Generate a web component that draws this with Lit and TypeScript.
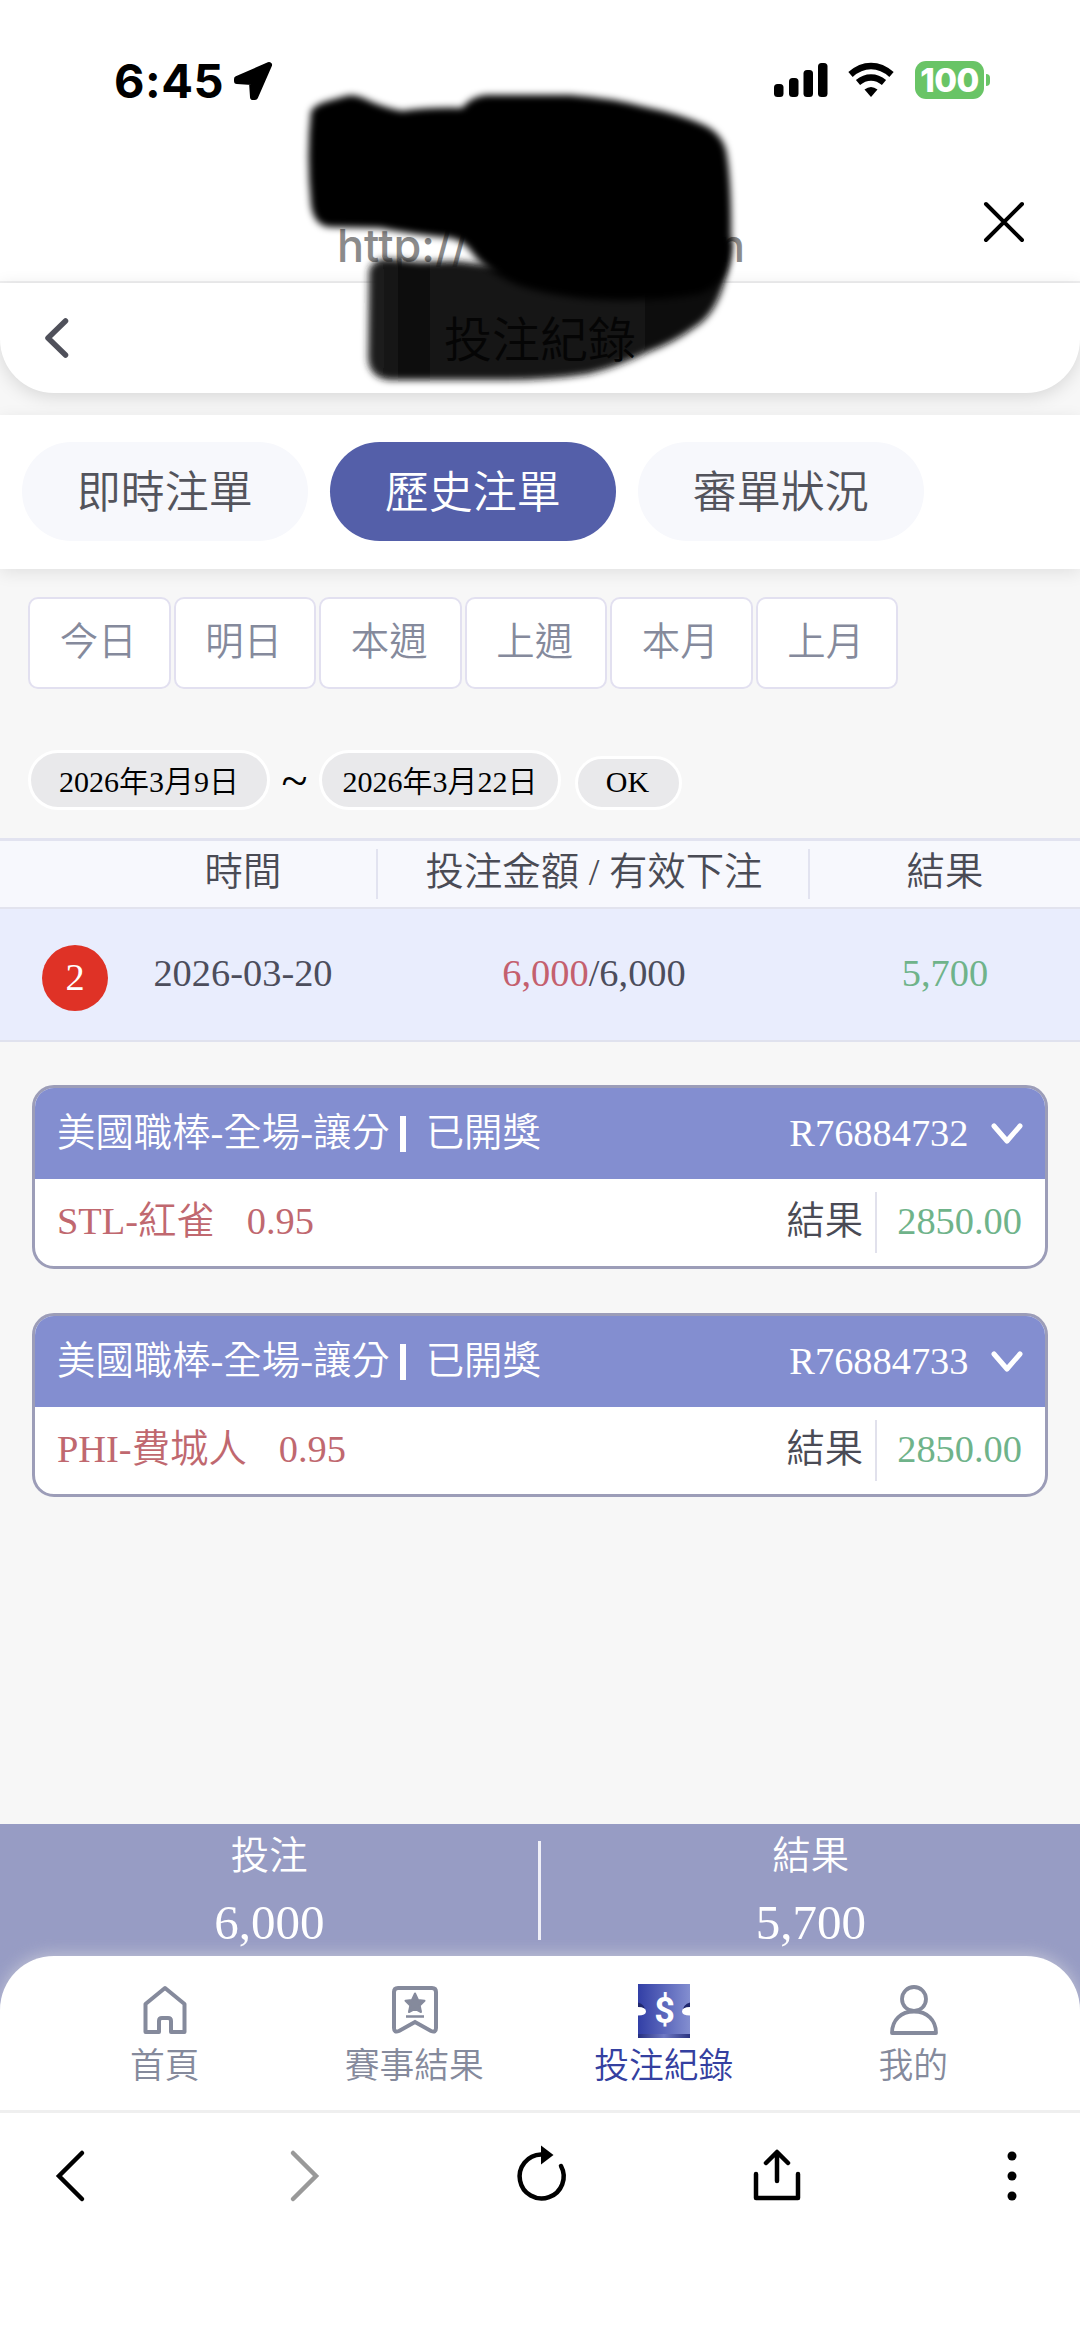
import { LitElement, html, css, svg } from "lit";
import { customElement, property } from "lit/decorators.js";

interface Bet {
  market: string;
  status: string;
  id: string;
  pick: string;
  odds: string;
  result: string;
}

const TABS = ["即時注單", "歷史注單", "審單狀況"];
const RANGES = ["今日", "明日", "本週", "上週", "本月", "上月"];
const BETS: Bet[] = [
  { market: "美國職棒-全場-讓分", status: "已開獎", id: "R76884732", pick: "STL-紅雀", odds: "0.95", result: "2850.00" },
  { market: "美國職棒-全場-讓分", status: "已開獎", id: "R76884733", pick: "PHI-費城人", odds: "0.95", result: "2850.00" },
];

@customElement("bet-card")
export class BetCard extends LitElement {
  @property({ attribute: false }) bet!: Bet;

  static styles = css`
    :host {
      display: block;
      box-sizing: border-box;
      height: 184px;
      border: 3px solid #9c9db8;
      border-radius: 22px;
      overflow: hidden;
      background: #fff;
      font-size: 38.4px;
      line-height: 44px;
    }
    .head {
      box-sizing: border-box;
      height: 91px;
      padding: 0 21px 2px 22px;
      display: flex;
      align-items: center;
      background: #838ed0;
      color: #fff;
    }
    .bar { width: 6px; height: 36px; background: #fff; margin: 3px 20px 0 10px; }
    .id { margin-left: auto; }
    .chev { width: 34px; height: 24px; margin: 2px 0 0 21.5px; }
    .body { display: flex; align-items: center; height: 87px; box-sizing: border-box; padding: 0 23px 3px 22px; }
    .pick { color: #c0686f; }
    .odds { color: #c0686f; margin-left: 32px; }
    .label { color: #4a4b55; margin-left: auto; }
    .rule { width: 2px; height: 61px; background: #e1e1ec; margin: 3px 20px 0 12px; }
    .result { color: #6fb38a; }
  `;

  render() {
    const b = this.bet;
    return html`
      <div class="head">
        <span>${b.market}</span><span class="bar"></span><span>${b.status}</span>
        <span class="id">${b.id}</span>
        <svg class="chev" viewBox="0 0 34 24" fill="none" stroke="#fff" stroke-width="5" stroke-linecap="round" stroke-linejoin="round">
          <path d="M4 4 L17 19 L30 4" />
        </svg>
      </div>
      <div class="body">
        <span class="pick">${b.pick}</span><span class="odds">${b.odds}</span>
        <span class="label">結果</span><span class="rule"></span><span class="result">${b.result}</span>
      </div>
    `;
  }
}

const homeIcon = svg`<path d="M4.500 20 L24 4 L43.500 20 V48 H30 V37 Q30 34 27 34 H21 Q18 34 18 37 V48 H4.500 Z" />`;

@customElement("app-root")
export class AppRoot extends LitElement {
  static styles = css`
    :host {
      display: flex;
      flex-direction: column;
      position: relative;
      box-sizing: border-box;
      width: 1080px;
      height: 2341px;
      overflow: hidden;
      background: #f7f7f7;
      font-family: "Liberation Serif", "Noto Sans CJK TC", serif;
      font-weight: 350;
      color: #4a4b55;
    }
    svg { display: block; flex: none; overflow: visible; }
    .status {
      height: 160px;
      box-sizing: border-box;
      padding: 0 90px 0 114px;
      display: flex;
      align-items: center;
      background: #fff;
      font-family: Inter, sans-serif;
      color: #000;
    }
    .time { font-size: 47px; font-weight: 750; line-height: 50px; letter-spacing: 0.5px; padding-top: 2px; }
    .arrow { margin-left: 8px; margin-top: 2px; }
    .icons { margin-left: auto; display: flex; align-items: center; }
    .wifi { margin-left: 20px; }
    .battery {
      width: 69px; height: 38px; border-radius: 11px; margin-left: 21px; 
      background: #69c466; color: #fff; font-weight: 800; font-size: 33px; line-height: 38px; text-align: center; letter-spacing: -0.5px;
    }
    .nub { width: 4px; height: 12px; margin-left: 2px; background: #69c466; border-radius: 0 4px 4px 0; }
    .address {
      height: 123px; box-sizing: border-box; border-bottom: 2px solid #f0f0f1; background: #fff;
      display: flex; align-items: center; position: relative; justify-content: flex-end; padding-right: 54px;
      font-family: Inter, sans-serif;
    }
    .url {
      position: absolute; left: 337px; width: 408px; top: 58px; display: flex; justify-content: space-between;
      font-size: 45px; line-height: 56px; color: #8b8b8b; font-weight: 500;
    }
    .close { margin-top: 2px; }
    .title {
      height: 110px; display: flex; align-items: center; justify-content: center; position: relative; flex: none;
      background: #fff; border-radius: 0 0 54px 54px; box-shadow: 0 4px 18px rgba(0, 0, 0, 0.13);
      font-size: 47.5px;
    }
    .back { position: absolute; left: 42px; top: 32px; }
    .scribble { position: absolute; left: 290px; top: 80px; pointer-events: none; }
    .faint { position: absolute; left: 0; right: 0; top: 314px; text-align: center; font-size: 48px; line-height: 54px; color: #050505; }
    .tabs {
      margin-top: 22px; height: 154px; box-sizing: border-box; flex: none; padding: 0 22px 1px; display: flex; gap: 22.5px; align-items: center;
      background: #fff; box-shadow: 0 4px 16px rgba(0, 0, 0, 0.09); font-size: 44px; position: relative;
    }
    .tab { width: 285.5px; height: 99px; box-sizing: border-box; padding: 0 0 6px 0; border-radius: 50px; background: #f7f8fc; display: flex; align-items: center; justify-content: center; color: #53545c; }
    .tab.on { background: #545fa9; color: #fff; }
    .ranges { display: flex; gap: 3px; margin: 28px 0 0 28px; font-size: 38.4px; }
    .range { width: 142.5px; height: 92px; box-sizing: border-box; padding: 0 2px 11px 0; border: 2px solid #e2e0f0; border-radius: 10px; background: #fff; display: flex; align-items: center; justify-content: center; color: #858a9c; }
    .dates { display: flex; align-items: flex-end; height: 60px; margin: 61px 0 0 28px; font-size: 30px; color: #000; }
    .pill { box-sizing: border-box; height: 60px; width: 242px; padding-bottom: 3px; border: 3px solid #fff; border-radius: 30px; background: #e9e9eb; display: flex; align-items: center; justify-content: center; white-space: nowrap; }
    .tilde { width: 49px; text-align: center; font-size: 48px; line-height: 58px; }
    .ok { width: 107px; height: 54px; margin-left: 14px; padding: 0 2px 3px 0; }
    .grid { display: grid; grid-template-columns: 10% 25% 40% 25%; align-items: center; text-align: center; font-size: 38.4px; box-sizing: border-box; flex: none; }
    .ghead { margin-top: 28px; height: 71px; border-top: 3px solid #e2e3f0; border-bottom: 2px solid #e2e3ee; background: #f7f8fd; }
    .cell { height: 50px; line-height: 47px; }
    .cell + .cell { border-left: 2px solid #e2e3f0; margin-left: -2px; }
    .grow { height: 133px; border-bottom: 2px solid #e0e2ee; background: #e9edfd; color: #4c4d5c; line-height: 44px; }
    .val { padding-bottom: 3px; }
    .count { width: 66px; height: 66px; border-radius: 50%; background: #df3226; color: #fff; line-height: 64px; margin: 7px 0 0 42px; }
    .red { color: #c4606e; }
    .green { color: #6fb38a; }
    .cards { display: flex; flex-direction: column; gap: 44px; margin: 43px 32px 0; }
    .summary { margin-top: auto; height: 192px; margin-bottom: -60px; flex: none; background: #979cc4; color: #fff; display: flex; padding-top: 10px; box-sizing: border-box; }
    .sum { flex: 1; text-align: center; font-size: 38.4px; line-height: 44px; }
    .sum b { display: block; font-weight: 400; font-size: 49px; line-height: 56px; margin-top: 17px; }
    .split { width: 3px; height: 99px; margin: 7px 1px 0 -1px; background: #f0f0f8; }
    .nav { height: 157px; box-sizing: border-box; padding: 28px 42px 0 40px; border-bottom: 3px solid #efefef; border-radius: 54px 54px 0 0; background: #fff; box-shadow: 0 -2px 16px rgba(220, 220, 225, 0.6); display: flex; flex: none; }
    .item { flex: 1; display: flex; flex-direction: column; align-items: center; font-size: 34.8px; line-height: 40px; color: #858a9c; gap: 11px; }
    .item.on { color: #3440a0; gap: 9px; }
    .item svg { margin-left: 1px; }
    .tools { height: 228px; box-sizing: border-box; padding: 35px 40px 0 42px; background: #fff; display: flex; justify-content: space-between; flex: none; }
  `;

  render() {
    return html`
      <div class="status">
        <span class="time">6:45</span>
        <svg class="arrow" width="42" height="40" viewBox="0 0 42 40">
          <path d="M37 4 L5 18 L5 20 L20 21 L21 36 L23 36 Z" fill="#000" stroke="#000" stroke-width="6" stroke-linejoin="round" />
        </svg>
        <div class="icons">
          <svg width="54" height="36" viewBox="0 0 54 36">
            <rect x="0" y="22" width="9.5" height="13" rx="3.5" /><rect x="15" y="16" width="9.5" height="19" rx="3.5" />
            <rect x="29.5" y="8" width="9.5" height="27" rx="3.5" /><rect x="44" y="1" width="9.5" height="34" rx="3.5" />
          </svg>
          <svg class="wifi" width="46" height="36" viewBox="0 0 46 36">
            <g fill="none" stroke="#000" stroke-width="6.5"><path d="M2.5 12.5 Q12 4 23 4 T43.5 12.5" /><path d="M10 20.5 Q16 15.5 23 15.5 T36 20.5" /></g>
            <path d="M16.5 27.5 Q23 22.5 29.5 27.5 L23 35 Z" />
          </svg>
          <div class="battery">100</div><div class="nub"></div>
        </div>
      </div>
      <div class="address">
        <div class="url"><span>http://</span><span>n</span></div>
        <svg class="close" width="44" height="44" viewBox="0 0 44 44" stroke="#000" stroke-width="4" stroke-linecap="round"><path d="M4 4 L40 40 M40 4 L4 40" /></svg>
      </div>
      <div class="title">
        <svg class="back" width="30" height="46" viewBox="0 0 30 46" fill="none" stroke="#4f505a" stroke-width="5.5" stroke-linecap="round" stroke-linejoin="round"><path d="M23.5 6 L6 23 L23.5 40" /></svg>
      </div>
      <svg class="scribble" width="480" height="320" viewBox="290 80 480 320">
        <defs>
          <filter id="soft" x="-10%" y="-10%" width="120%" height="120%"><feGaussianBlur stdDeviation="3.5" /></filter>
          <linearGradient id="ink"><stop offset="0" stop-color="#222" /><stop offset="0.11" stop-color="#0c0c0c" /><stop offset="0.22" stop-color="#161616" /><stop offset="0.7" stop-color="#141414" /><stop offset="1" stop-color="#080808" /></linearGradient>
        </defs>
        <path filter="url(#soft)" fill="url(#ink)" d="M369 270 Q374 257 392 259 L420 262 L455 261 L500 266 L600 240 L731 240 Q731 262 724 283 Q715 315 695 327 Q675 342 648 352 Q615 368 588 374 Q550 380 503 380 L390 380 Q369 378 368 358 Z" />
        <path filter="url(#soft)" fill="#000" d="M311 111 Q316 104 328 101 L346 96 Q354 94 363 98 Q384 108 402 111 Q430 107 462 108 Q472 96 486 95 L570 95 Q612 98 645 107 Q680 114 704 125 Q721 133 726 150 Q732 180 731 247 Q729 284 700 294 Q650 303 590 299 Q545 295 515 284 Q485 270 473 254 Q464 240 450 238 Q410 234 380 228 L330 227 Q314 226 311 205 Q306 155 311 111 Z" />
      </svg>
      <div class="faint">投注紀錄</div>
      <div class="tabs">${TABS.map((t, i) => html`<div class="tab ${i === 1 ? "on" : ""}">${t}</div>`)}</div>
      <div class="ranges">${RANGES.map((r) => html`<div class="range">${r}</div>`)}</div>
      <div class="dates">
        <div class="pill">2026年3月9日</div><div class="tilde">~</div><div class="pill">2026年3月22日</div><div class="pill ok">OK</div>
      </div>
      <div class="grid ghead">
        <span></span><div class="cell">時間</div><div class="cell">投注金額 / 有效下注</div><div class="cell">結果</div>
      </div>
      <div class="grid grow">
        <div class="count">2</div><div class="val">2026-03-20</div><div class="val"><span class="red">6,000</span>/6,000</div><div class="val green">5,700</div>
      </div>
      <div class="cards">${BETS.map((b) => html`<bet-card .bet=${b}></bet-card>`)}</div>
      <div class="summary">
        <div class="sum">投注<b>6,000</b></div><div class="split"></div><div class="sum">結果<b>5,700</b></div>
      </div>
      <div class="nav">
        <div class="item">
          <svg width="48" height="52" viewBox="0 0 48 52" fill="none" stroke="#858a9c" stroke-width="4" stroke-linejoin="round">${homeIcon}</svg>首頁
        </div>
        <div class="item">
          <svg width="48" height="52" viewBox="0 0 48 52">
            <path d="M7 4 H41 Q45 4 45 8 V44 Q45 49 40 47 L24 38 L8 47 Q3 49 3 44 V8 Q3 4 7 4 Z" fill="none" stroke="#858a9c" stroke-width="4" />
            <path d="M24 9.5 L27 16 L33.5 16.8 L28.7 21.5 L30 28 L24 24.8 L18 28 L19.3 21.5 L14.5 16.8 L21 16 Z" fill="#858a9c" stroke="#858a9c" stroke-width="2" stroke-linejoin="round" />
            <path d="M15 32.5 H33" stroke="#858a9c" stroke-width="2.5" />
          </svg>賽事結果
        </div>
        <div class="item on">
          <svg width="52" height="54" viewBox="0 0 52 54">
            <defs>
              <linearGradient id="tk"><stop offset="0" stop-color="#323fa6" /><stop offset="1" stop-color="#838ed0" /></linearGradient>
              <linearGradient id="edge"><stop offset="0" stop-color="#262f80" /><stop offset="0.5" stop-color="#6f79c4" /><stop offset="1" stop-color="#2b3480" /></linearGradient>
            </defs>
            <rect width="52" height="54" fill="url(#tk)" />
            <rect y="50" width="52" height="4" fill="url(#edge)" />
            <path d="M0 18.5 Q7 20 7.5 28 H0 Z M52 18.5 Q45 20 44.5 28 H52 Z" fill="#20286e" />
            <path d="M0 23 Q8 23 8 27.5 Q8 31.5 0 31.5 Z M52 23 Q44 23 44 27.5 Q44 31.5 52 31.5 Z" fill="#fff" />
            <text x="26.5" y="39" text-anchor="middle" font-family="Roboto, sans-serif" font-weight="700" font-size="36" fill="#fff">$</text>
          </svg>投注紀錄
        </div>
        <div class="item">
          <svg width="50" height="52" viewBox="0 0 50 52" fill="none" stroke="#858a9c" stroke-width="3.8"><circle cx="25" cy="15" r="12" /><path d="M3 49 C3 36 12 27.5 25 27.5 S47 36 47 49 Z" stroke-linejoin="round" /></svg>我的
        </div>
      </div>
      <div class="tools">
        <svg width="56" height="56" viewBox="0 0 56 56" fill="none" stroke="#000" stroke-width="4.5" stroke-linecap="round"><path d="M40 5 L17 28 L40 51" /></svg>
        <svg width="56" height="56" viewBox="0 0 56 56" fill="none" stroke="#999" stroke-width="4.5" stroke-linecap="round"><path d="M15 5 L38 28 L15 51" /></svg>
        <svg width="56" height="60" viewBox="0 0 56 60" fill="none" stroke="#000" stroke-width="4.5"><path d="M28 6.5 A22 22 0 1 0 48 18" stroke-linecap="round" /><path d="M28 -2.5 L40.5 7 L28 16.5 Z" fill="#000" stroke="none" /></svg>
        <svg width="56" height="60" viewBox="0 0 56 60" fill="none" stroke="#000" stroke-width="4.5" stroke-linecap="round" stroke-linejoin="round"><path d="M7 26 V50 H49 V26 M28 33 V5 M17 15 L28 4 L39 15" /></svg>
        <svg width="56" height="60" viewBox="0 0 56 60"><circle cx="28" cy="8" r="4.5" /><circle cx="28" cy="28" r="4.5" /><circle cx="28" cy="48" r="4.5" /></svg>
      </div>
    `;
  }
}
